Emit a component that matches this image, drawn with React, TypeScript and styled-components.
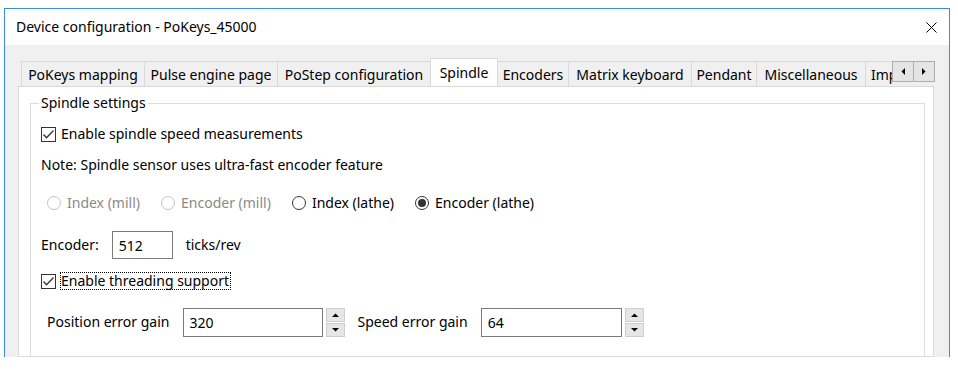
import React from "react";
import styled, { createGlobalStyle } from "styled-components";

const GlobalStyle = createGlobalStyle`
  html, body { margin: 0; padding: 0; background: #ffffff; }
  body {
    font-family: "Noto Sans", "Open Sans", sans-serif;
    font-size: 14px;
    color: #000000;
  }
  * { box-sizing: border-box; }
`;

const Page = styled.div`
  width: 958px;
  height: 370px;
  padding: 8px 0 0 4px;
  background: #ffffff;
`;

const Window = styled.div`
  width: 946px;
  height: 349px;
  border: 1px solid #3a8de0;
  border-bottom: none;
  overflow: hidden;
  display: flex;
  flex-direction: column;
  background: #f0f0f0;
`;

const TitleBar = styled.div`
  height: 36px;
  flex: 0 0 36px;
  background: #ffffff;
  display: flex;
  align-items: center;
  justify-content: space-between;
  padding: 0 12px 0 11px;
`;

const Title = styled.span`
  font-size: 14px;
  line-height: 20px;
`;

const CloseIcon = styled.svg`
  width: 11px;
  height: 11px;
  display: block;
`;

const Body = styled.div`
  flex: 1;
  display: flex;
  flex-direction: column;
  padding: 13px 15px 0 13px;
  min-height: 0;
`;

const TabRow = styled.div`
  display: flex;
  align-items: flex-end;
  height: 28px;
  flex: 0 0 28px;
  margin: 0 -1px 0 3px;
`;

const TabViewport = styled.div`
  flex: 1;
  display: flex;
  align-items: flex-end;
  height: 100%;
  overflow: hidden;
`;

const Tab = styled.div<{ $w: number; $active?: boolean }>`
  flex: 0 0 ${(p) => p.$w}px;
  width: ${(p) => p.$w}px;
  height: ${(p) => (p.$active ? 29 : 25)}px;
  margin-left: -1px;
  margin-bottom: ${(p) => (p.$active ? -1 : 0)}px;
  position: relative;
  z-index: ${(p) => (p.$active ? 2 : 1)};
  display: flex;
  align-items: center;
  justify-content: center;
  padding-bottom: ${(p) => (p.$active ? 2 : 0)}px;
  white-space: nowrap;
  overflow: hidden;
  background: ${(p) => (p.$active ? "#ffffff" : "#f0f0f0")};
  border: 1px solid #d9d9d9;
  border-bottom: none;
  font-size: 14px;
  &:first-child { margin-left: 0; }
`;

const ClippedTab = styled(Tab)`
  justify-content: flex-start;
  padding-left: 5px;
`;

const ScrollButtons = styled.div`
  align-self: flex-start;
  margin-top: 3px;
  display: flex;
`;

const ScrollButton = styled.div`
  width: 22px;
  height: 21px;
  border: 1px solid #adadad;
  background: #e5e5e5;
  display: flex;
  align-items: center;
  justify-content: center;
  & + & { margin-left: -1px; }
`;

const Panel = styled.div`
  flex: 1;
  position: relative;
  z-index: 1;
  background: #ffffff;
  border: 1px solid #d9d9d9;
  padding: 6px 8px 0 11px;
  min-height: 0;
`;

const Group = styled.fieldset`
  margin: 0;
  min-width: 0;
  height: 320px;
  border: 1px solid #dcdcdc;
  padding: 6px 10px 0 10px;
`;

const Legend = styled.legend`
  padding: 0 2px;
  margin-left: -2px;
  line-height: 20px;
  font-size: 14px;
`;

const Row = styled.div<{ $h: number; $indent?: number; $gap?: number }>`
  height: ${(p) => p.$h}px;
  display: flex;
  align-items: center;
  padding-left: ${(p) => p.$indent ?? 0}px;
  gap: ${(p) => p.$gap ?? 0}px;
  white-space: nowrap;
`;

const Text = styled.span<{ $disabled?: boolean }>`
  color: ${(p) => (p.$disabled ? "#8a8a8a" : "#000000")};
  line-height: 20px;
`;

const CheckLabel = styled.label`
  display: inline-flex;
  align-items: center;
  gap: 5px;
`;

const Box = styled.span<{ $disabled?: boolean }>`
  width: 15px;
  height: 15px;
  border: 1px solid ${(p) => (p.$disabled ? "#c8c8c8" : "#333333")};
  background: #ffffff;
  display: inline-flex;
  align-items: center;
  justify-content: center;
`;

const FocusText = styled.span`
  border: 1px dotted #000000;
  padding: 0 1px 0 0;
  margin-left: -1px;
  line-height: 16px;
`;

const RadioItem = styled.label`
  display: inline-flex;
  align-items: center;
  gap: 6px;
`;

const RadioCircle = styled.span<{ $disabled?: boolean; $checked?: boolean }>`
  width: 14px;
  height: 14px;
  border-radius: 50%;
  border: 1px solid ${(p) => (p.$disabled ? "#c4c4c4" : "#333333")};
  background: #ffffff;
  display: inline-flex;
  align-items: center;
  justify-content: center;
  &::after {
    content: "";
    display: ${(p) => (p.$checked ? "block" : "none")};
    width: 8px;
    height: 8px;
    border-radius: 50%;
    background: #333333;
  }
`;

const Input = styled.div<{ $w: number; $h: number }>`
  width: ${(p) => p.$w}px;
  height: ${(p) => p.$h}px;
  border: 1px solid #7a7a7a;
  background: #ffffff;
  display: flex;
  align-items: center;
  padding-left: 6px;
`;

const SpinField = styled.div`
  display: flex;
  align-items: center;
  gap: 3px;
`;

const Spinner = styled.div`
  display: flex;
  flex-direction: column;
  gap: 1px;
`;

const SpinButton = styled.div`
  width: 19px;
  height: 14px;
  border: 1px solid #cfcfcf;
  background: #e6e6e6;
  display: flex;
  align-items: center;
  justify-content: center;
`;

const Check = () => (
  <svg width="13" height="13" viewBox="0 0 13 13">
    <polyline points="1.5,6.5 4.5,9.8 11.5,2.5" fill="none" stroke="#333" strokeWidth="1.3" />
  </svg>
);

const Arrow = ({ dir }: { dir: "up" | "down" | "left" | "right" }) => {
  const pts = {
    up: "0,4 7,4 3.5,0.5",
    down: "0,0 7,0 3.5,3.5",
    left: "4,0 4,7 0.5,3.5",
    right: "0,0 0,7 3.5,3.5",
  }[dir];
  const horiz = dir === "left" || dir === "right";
  return (
    <svg width={horiz ? 4 : 7} height={horiz ? 7 : 4} viewBox={horiz ? "0 0 4 7" : "0 0 7 4"}>
      <polygon points={pts} fill="#000" />
    </svg>
  );
};

const SpinBox = ({ value, width }: { value: string; width: number }) => (
  <SpinField>
    <Input $w={width} $h={29}>{value}</Input>
    <Spinner>
      <SpinButton><Arrow dir="up" /></SpinButton>
      <SpinButton><Arrow dir="down" /></SpinButton>
    </Spinner>
  </SpinField>
);

const tabs: { label: string; w: number; active?: boolean }[] = [
  { label: "PoKeys mapping", w: 124 },
  { label: "Pulse engine page", w: 134 },
  { label: "PoStep configuration", w: 154 },
  { label: "Spindle", w: 68, active: true },
  { label: "Encoders", w: 72 },
  { label: "Matrix keyboard", w: 124 },
  { label: "Pendant", w: 66 },
  { label: "Miscellaneous", w: 110 },
];

const radios = [
  { label: "Index (mill)", disabled: true },
  { label: "Encoder (mill)", disabled: true },
  { label: "Index (lathe)" },
  { label: "Encoder (lathe)", checked: true },
];

export default function App() {
  return (
    <Page>
      <GlobalStyle />
      <Window>
        <TitleBar>
          <Title>Device configuration - PoKeys_45000</Title>
          <CloseIcon viewBox="0 0 11 11">
            <path d="M0.5 0.5 L10.5 10.5 M10.5 0.5 L0.5 10.5" stroke="#000" strokeWidth="1" fill="none" />
          </CloseIcon>
        </TitleBar>
        <Body>
          <TabRow>
            <TabViewport>
              {tabs.map((t) => (
                <Tab key={t.label} $w={t.w} $active={t.active}>
                  {t.label}
                </Tab>
              ))}
              <ClippedTab $w={110}>Import/Export</ClippedTab>
            </TabViewport>
            <ScrollButtons>
              <ScrollButton><Arrow dir="left" /></ScrollButton>
              <ScrollButton><Arrow dir="right" /></ScrollButton>
            </ScrollButtons>
          </TabRow>
          <Panel>
            <Group>
              <Legend>Spindle settings</Legend>
              <Row $h={30}>
                <CheckLabel>
                  <Box><Check /></Box>
                  <Text>Enable spindle speed measurements</Text>
                </CheckLabel>
              </Row>
              <Row $h={32}>
                <Text>Note: Spindle sensor uses ultra-fast encoder feature</Text>
              </Row>
              <Row $h={44} $indent={6} $gap={21}>
                {radios.map((r) => (
                  <RadioItem key={r.label}>
                    <RadioCircle $disabled={r.disabled} $checked={r.checked} />
                    <Text $disabled={r.disabled}>{r.label}</Text>
                  </RadioItem>
                ))}
              </Row>
              <Row $h={40} $gap={13}>
                <Text>Encoder:</Text>
                <Input $w={61} $h={28}>512</Input>
                <Text>ticks/rev</Text>
              </Row>
              <Row $h={32}>
                <CheckLabel>
                  <Box><Check /></Box>
                  <FocusText>Enable threading support</FocusText>
                </CheckLabel>
              </Row>
              <Row $h={50} $indent={6} $gap={13}>
                <Text>Position error gain</Text>
                <SpinBox value="320" width={140} />
                <Text>Speed error gain</Text>
                <SpinBox value="64" width={141} />
              </Row>
              <Row $h={34}>
                <Box $disabled />
              </Row>
            </Group>
          </Panel>
        </Body>
      </Window>
    </Page>
  );
}
